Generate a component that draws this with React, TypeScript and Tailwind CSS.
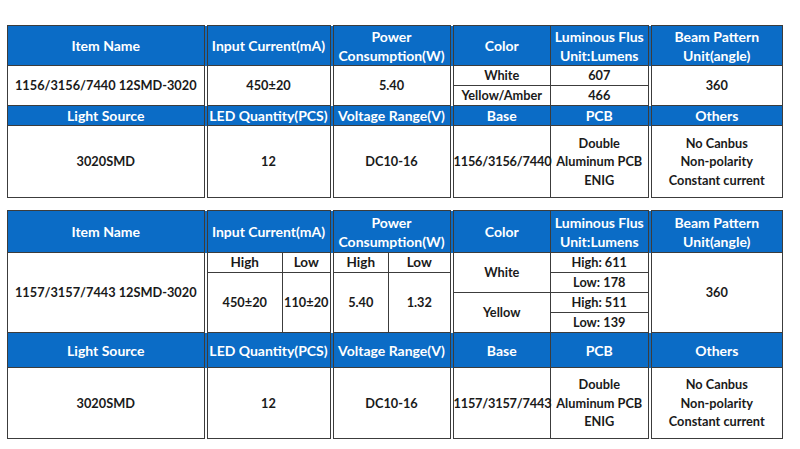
import React from 'react';

const cell = 'border border-solid border-[#3c3c3c] p-0 text-center align-middle font-bold whitespace-nowrap';
const head = `${cell} bg-[#0b6cc6] text-white text-[14px] leading-[19px]`;
const body = `${cell} bg-white text-[#1a1a1a] text-[12.75px] leading-[18.5px]`;
// double rule between column groups
const dbl = 'border-r-4 [border-right-style:double]';

function SpecTableOne() {
  return (
    <table className="table-fixed border-collapse w-[775px]">
      <colgroup>
        <col className="w-[198px]" />
        <col className="w-[126px]" />
        <col className="w-[120px]" />
        <col className="w-[99px]" />
        <col className="w-[99px]" />
        <col className="w-[133px]" />
      </colgroup>
      <tbody>
        <tr className="h-[40px]">
          <td className={`${head} ${dbl}`}>Item Name</td>
          <td className={`${head} ${dbl}`}>Input Current(mA)</td>
          <td className={`${head} ${dbl}`}>Power<br />Consumption(W)</td>
          <td className={head}>Color</td>
          <td className={`${head} ${dbl}`}>Luminous Flus<br />Unit:Lumens</td>
          <td className={head}>Beam Pattern<br />Unit(angle)</td>
        </tr>
        <tr className="h-[20px]">
          <td rowSpan={2} className={`${body} ${dbl}`}>1156/3156/7440 12SMD-3020</td>
          <td rowSpan={2} className={`${body} ${dbl}`}>450±20</td>
          <td rowSpan={2} className={`${body} ${dbl}`}>5.40</td>
          <td className={body}>White</td>
          <td className={`${body} ${dbl}`}>607</td>
          <td rowSpan={2} className={body}>360</td>
        </tr>
        <tr className="h-[20px]">
          <td className={body}>Yellow/Amber</td>
          <td className={`${body} ${dbl}`}>466</td>
        </tr>
        <tr className="h-[20px]">
          <td className={`${head} ${dbl}`}>Light Source</td>
          <td className={`${head} ${dbl}`}>LED Quantity(PCS)</td>
          <td className={`${head} ${dbl}`}>Voltage Range(V)</td>
          <td className={head}>Base</td>
          <td className={`${head} ${dbl}`}>PCB</td>
          <td className={head}>Others</td>
        </tr>
        <tr className="h-[72px]">
          <td className={`${body} ${dbl}`}>3020SMD</td>
          <td className={`${body} ${dbl}`}>12</td>
          <td className={`${body} ${dbl}`}>DC10-16</td>
          <td className={`${body} tracking-[-0.2px]`}>1156/3156/7440</td>
          <td className={`${body} ${dbl}`}>Double<br />Aluminum PCB<br />ENIG</td>
          <td className={body}>No Canbus<br />Non-polarity<br />Constant current</td>
        </tr>
      </tbody>
    </table>
  );
}

function SpecTableTwo() {
  return (
    <table className="table-fixed border-collapse w-[775px]">
      <colgroup>
        <col className="w-[198px]" />
        <col className="w-[77px]" />
        <col className="w-[49px]" />
        <col className="w-[57px]" />
        <col className="w-[63px]" />
        <col className="w-[99px]" />
        <col className="w-[99px]" />
        <col className="w-[133px]" />
      </colgroup>
      <tbody>
        <tr className="h-[42px]">
          <td className={`${head} ${dbl}`}>Item Name</td>
          <td colSpan={2} className={`${head} ${dbl}`}>Input Current(mA)</td>
          <td colSpan={2} className={`${head} ${dbl}`}>Power<br />Consumption(W)</td>
          <td className={head}>Color</td>
          <td className={`${head} ${dbl}`}>Luminous Flus<br />Unit:Lumens</td>
          <td className={head}>Beam Pattern<br />Unit(angle)</td>
        </tr>
        <tr className="h-[20px]">
          <td rowSpan={4} className={`${body} ${dbl}`}>1157/3157/7443 12SMD-3020</td>
          <td className={`${body} text-[13.5px]`}>High</td>
          <td className={`${body} text-[13.5px] ${dbl}`}>Low</td>
          <td className={`${body} text-[13.5px]`}>High</td>
          <td className={`${body} text-[13.5px] ${dbl}`}>Low</td>
          <td rowSpan={2} className={body}>White</td>
          <td className={`${body} ${dbl}`}>High: 611</td>
          <td rowSpan={4} className={body}>360</td>
        </tr>
        <tr className="h-[20px]">
          <td rowSpan={3} className={body}>450±20</td>
          <td rowSpan={3} className={`${body} ${dbl}`}>110±20</td>
          <td rowSpan={3} className={body}>5.40</td>
          <td rowSpan={3} className={`${body} ${dbl}`}>1.32</td>
          <td className={`${body} ${dbl}`}>Low: 178</td>
        </tr>
        <tr className="h-[20px]">
          <td rowSpan={2} className={body}>Yellow</td>
          <td className={`${body} ${dbl}`}>High: 511</td>
        </tr>
        <tr className="h-[20px]">
          <td className={`${body} ${dbl}`}>Low: 139</td>
        </tr>
        <tr className="h-[35px]">
          <td className={`${head} ${dbl}`}>Light Source</td>
          <td colSpan={2} className={`${head} ${dbl}`}>LED Quantity(PCS)</td>
          <td colSpan={2} className={`${head} ${dbl}`}>Voltage Range(V)</td>
          <td className={head}>Base</td>
          <td className={`${head} ${dbl}`}>PCB</td>
          <td className={head}>Others</td>
        </tr>
        <tr className="h-[71px]">
          <td className={`${body} ${dbl}`}>3020SMD</td>
          <td colSpan={2} className={`${body} ${dbl}`}>12</td>
          <td colSpan={2} className={`${body} ${dbl}`}>DC10-16</td>
          <td className={`${body} tracking-[-0.2px]`}>1157/3157/7443</td>
          <td className={`${body} ${dbl}`}>Double<br />Aluminum PCB<br />ENIG</td>
          <td className={body}>No Canbus<br />Non-polarity<br />Constant current</td>
        </tr>
      </tbody>
    </table>
  );
}

export default function App() {
  return (
    <div className="w-[800px] h-[449px] bg-white pt-[25px] pl-[7px] font-['Lato','Open_Sans',sans-serif] flex flex-col gap-[12px]">
      <SpecTableOne />
      <SpecTableTwo />
    </div>
  );
}
